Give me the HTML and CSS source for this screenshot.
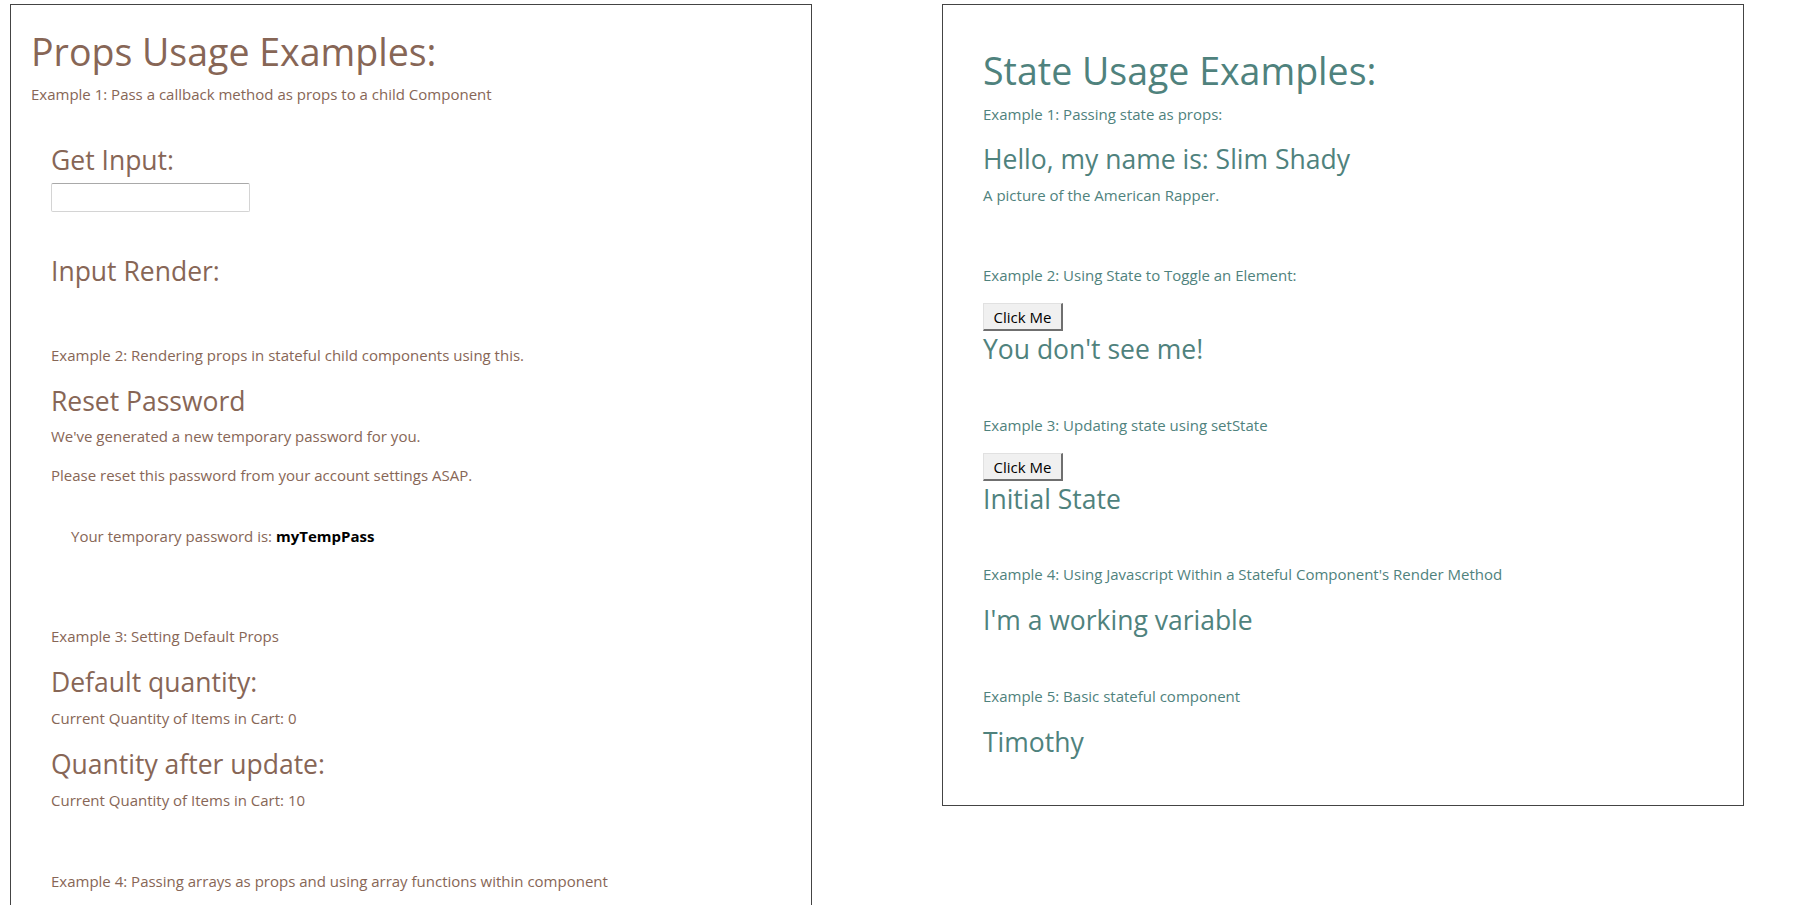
FILE: index.html
```html
<!DOCTYPE html>
<html lang="en">
<head>
<meta charset="utf-8">
<title>React Examples</title>
<link rel="stylesheet" href="styles.css">
</head>
<body>
<div class="page">
  <section class="panel panel-props">
    <h1 class="title">Props Usage Examples:</h1>
    <p class="label label-first">Example 1: Pass a callback method as props to a child Component</p>
    <div class="indent">
      <h2 class="heading get-input">Get Input:</h2>
      <input class="text-input" type="text">
      <h2 class="heading input-render">Input Render:</h2>

      <p class="label ex2">Example 2: Rendering props in stateful child components using this.</p>
      <h2 class="heading reset">Reset Password</h2>
      <p class="label generated">We've generated a new temporary password for you.</p>
      <p class="label please">Please reset this password from your account settings ASAP.</p>
      <p class="label temp">Your temporary password is: <strong class="pass">myTempPass</strong></p>

      <p class="label ex3">Example 3: Setting Default Props</p>
      <h2 class="heading default-qty">Default quantity:</h2>
      <p class="label qty">Current Quantity of Items in Cart: 0</p>
      <h2 class="heading after-update">Quantity after update:</h2>
      <p class="label qty">Current Quantity of Items in Cart: 10</p>

      <p class="label ex4">Example 4: Passing arrays as props and using array functions within component</p>
    </div>
  </section>

  <section class="panel panel-state">
    <h1 class="title">State Usage Examples:</h1>
    <p class="label s-ex1">Example 1: Passing state as props:</p>
    <h2 class="heading s-hello">Hello, my name is: Slim Shady</h2>
    <p class="label s-pic">A picture of the American Rapper.</p>

    <p class="label s-ex">Example 2: Using State to Toggle an Element:</p>
    <button class="btn" type="button">Click Me</button>
    <h2 class="heading s-after-btn">You don't see me!</h2>

    <p class="label s-ex">Example 3: Updating state using setState</p>
    <button class="btn" type="button">Click Me</button>
    <h2 class="heading s-after-btn">Initial State</h2>

    <p class="label s-ex s-ex4">Example 4: Using Javascript Within a Stateful Component's Render Method</p>
    <h2 class="heading s-var">I'm a working variable</h2>

    <p class="label s-ex5">Example 5: Basic stateful component</p>
    <h2 class="heading s-tim">Timothy</h2>
  </section>
</div>
</body>
</html>
```

FILE: styles.css
```css
html, body {
  margin: 0;
  padding: 0;
  background: #ffffff;
}

body {
  font-family: "Open Sans", "Noto Sans", sans-serif;
}

.page {
  display: flex;
  align-items: flex-start;
  gap: 130px;
  padding: 4px 0 0 10px;
}

.panel {
  box-sizing: border-box;
  width: 802px;
  border: 1px solid #444444;
  background: #ffffff;
}

.panel-props {
  color: #876656;
  padding: 23px 20px 40px 20px;
}

.panel-state {
  color: #4f827d;
  padding: 42px 40px 47px 40px;
}

.title {
  margin: 0;
  font-size: 37.5px;
  line-height: 48px;
  font-weight: 400;
}

.heading {
  margin: 0;
  font-size: 26.5px;
  line-height: 32px;
  font-weight: 400;
}

.label {
  margin: 0;
  font-size: 15px;
  line-height: 20px;
}

.indent {
  padding-left: 20px;
}

/* props panel spacing */
.label-first { margin-top: 8px; }
.get-input { margin-top: 40px; }
.text-input {
  display: block;
  box-sizing: border-box;
  width: 199px;
  height: 29px;
  margin: 7px 0 0 0;
  border: 1px solid #d4d4d4;
  border-top-color: #a9a9a9;
  border-radius: 2px;
  background: #ffffff;
  font: inherit;
}
.input-render { margin-top: 43px; }
.ex2 { margin-top: 58px; }
.reset { margin-top: 20px; }
.generated { margin-top: 9px; }
.please { margin-top: 19px; }
.temp { margin-top: 41px; padding-left: 20px; }
.pass { color: #000000; font-weight: 700; }
.ex3 { margin-top: 80px; }
.default-qty { margin-top: 20px; }
.qty { margin-top: 11px; }
.default-qty + .qty { margin-top: 10px; }
.after-update { margin-top: 20px; }
.after-update + .qty { margin-top: 10px; }
.ex4 { margin-top: 61px; }

/* state panel spacing */
.s-ex1 { margin-top: 9px; }
.s-hello { margin-top: 19px; }
.s-pic { margin-top: 10px; }
.s-ex { margin-top: 50px; }
.s-pic + .s-ex { margin-top: 60px; }
.s-after-btn { margin-top: 2px; }
.s-ex4 { margin-top: 49px; }
.s-var { margin-top: 20px; }
.s-ex5 { margin-top: 50px; }
.s-tim { margin-top: 20px; }

.btn {
  display: block;
  box-sizing: border-box;
  width: 80px;
  height: 28px;
  margin: 18px 0 0 0;
  padding: 0;
  font-family: "Open Sans", "Noto Sans", sans-serif;
  font-size: 15px;
  color: #000000;
  background: #f0f0f0;
  border-style: solid;
  border-width: 1px 2px 2px 1px;
  border-color: #e1e1e1 #6f6f6f #6f6f6f #e1e1e1;
  border-radius: 0;
}
```
